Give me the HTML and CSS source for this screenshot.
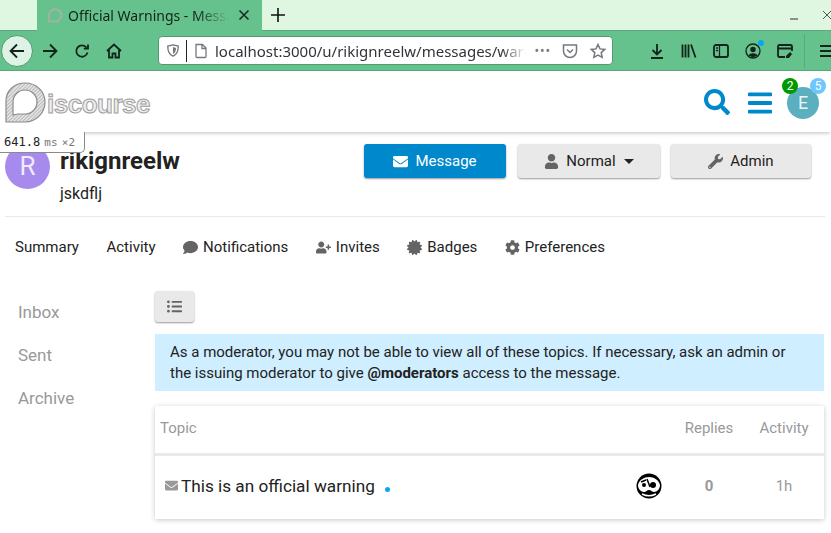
FILE: index.html
```html
<!DOCTYPE html>
<html>
<head>
	<title>Official Warnings - Messages</title>
	<meta charset="utf-8">
	<link rel="stylesheet" href="styles.css">
</head>
<body>
	<svg class="defs" width="0" height="0">
		<symbol id="i-search" viewBox="0 0 512 512"><path d="M505 442.7L405.3 343c-4.5-4.5-10.6-7-17-7H372c27.6-35.3 44-79.7 44-128C416 93.1 322.9 0 208 0S0 93.1 0 208s93.1 208 208 208c48.3 0 92.7-16.4 128-44v16.3c0 6.4 2.5 12.5 7 17l99.7 99.7c9.4 9.4 24.6 9.4 33.9 0l28.3-28.3c9.4-9.4 9.4-24.6.1-34zM208 336c-70.7 0-128-57.2-128-128 0-70.7 57.2-128 128-128 70.7 0 128 57.2 128 128 0 70.7-57.2 128-128 128z"/></symbol>
		<symbol id="i-bars" viewBox="0 0 448 512"><path d="M16 132h416c8.837 0 16-7.163 16-16V76c0-8.837-7.163-16-16-16H16C7.163 60 0 67.163 0 76v40c0 8.837 7.163 16 16 16zm0 160h416c8.837 0 16-7.163 16-16v-40c0-8.837-7.163-16-16-16H16c-8.837 0-16 7.163-16 16v40c0 8.837 7.163 16 16 16zm0 160h416c8.837 0 16-7.163 16-16v-40c0-8.837-7.163-16-16-16H16c-8.837 0-16 7.163-16 16v40c0 8.837 7.163 16 16 16z"/></symbol>
		<symbol id="i-envelope" viewBox="0 0 512 512"><path d="M502.3 190.8c3.9-3.1 9.7-.2 9.7 4.7V400c0 26.5-21.5 48-48 48H48c-26.5 0-48-21.5-48-48V195.6c0-5 5.7-7.8 9.7-4.7 22.4 17.4 52.1 39.5 154.1 113.6 21.1 15.4 56.7 47.8 92.2 47.6 35.7.3 72-32.8 92.3-47.6 102-74.1 131.6-96.3 154-113.7zM256 320c23.2.4 56.6-29.2 73.4-41.4 132.7-96.3 142.8-104.7 173.4-128.7 5.8-4.5 9.2-11.5 9.2-18.9v-19c0-26.5-21.5-48-48-48H48C21.5 64 0 85.5 0 112v19c0 7.4 3.4 14.3 9.2 18.9 30.6 23.9 40.7 32.4 173.4 128.7 16.8 12.2 50.2 41.8 73.4 41.4z"/></symbol>
		<symbol id="i-user" viewBox="0 0 448 512"><path d="M224 256c70.7 0 128-57.3 128-128S294.7 0 224 0 96 57.3 96 128s57.3 128 128 128zm89.6 32h-16.7c-22.2 10.2-46.9 16-72.9 16s-50.6-5.8-72.9-16h-16.7C60.2 288 0 348.2 0 422.4V464c0 26.5 21.5 48 48 48h352c26.5 0 48-21.5 48-48v-41.6c0-74.2-60.2-134.4-134.4-134.4z"/></symbol>
		<symbol id="i-wrench" viewBox="0 0 512 512"><path d="M507.73 109.1c-2.24-9.03-13.54-12.09-20.12-5.51l-74.36 74.36-67.88-11.31-11.31-67.88 74.36-74.36c6.62-6.62 3.43-17.9-5.66-20.16-47.38-11.74-99.55.91-136.58 37.93-39.64 39.64-50.55 97.1-34.05 147.2L18.74 402.76c-24.99 24.99-24.99 65.51 0 90.5 24.99 24.99 65.51 24.99 90.5 0l213.21-213.21c50.12 16.71 107.47 5.68 147.37-34.22 37.07-37.07 49.7-89.32 37.91-136.73zM64 472c-13.25 0-24-10.75-24-24 0-13.26 10.75-24 24-24s24 10.74 24 24c0 13.25-10.75 24-24 24z"/></symbol>
		<symbol id="i-comment" viewBox="0 0 512 512"><path d="M256 32C114.6 32 0 125.1 0 240c0 49.6 21.4 95 57 130.7C44.5 421.1 2.7 466 2.2 466.5c-2.2 2.3-2.8 5.7-1.5 8.7S4.8 480 8 480c66.3 0 116-31.8 140.6-51.4 32.7 12.3 69 19.4 107.4 19.4 141.4 0 256-93.1 256-208S397.4 32 256 32z"/></symbol>
		<symbol id="i-user-plus" viewBox="0 0 640 512"><path d="M624 208h-64v-64c0-8.8-7.2-16-16-16h-32c-8.8 0-16 7.2-16 16v64h-64c-8.8 0-16 7.2-16 16v32c0 8.8 7.2 16 16 16h64v64c0 8.8 7.2 16 16 16h32c8.8 0 16-7.2 16-16v-64h64c8.8 0 16-7.2 16-16v-32c0-8.8-7.2-16-16-16zm-400 48c70.7 0 128-57.3 128-128S294.7 0 224 0 96 57.3 96 128s57.3 128 128 128zm89.6 32h-16.7c-22.2 10.2-46.9 16-72.9 16s-50.6-5.8-72.9-16h-16.7C60.2 288 0 348.2 0 422.4V464c0 26.5 21.5 48 48 48h352c26.5 0 48-21.5 48-48v-41.6c0-74.2-60.2-134.4-134.4-134.4z"/></symbol>
		<symbol id="i-certificate" viewBox="0 0 512 512"><path d="M458.622 255.92l45.985-45.005c13.708-12.977 7.316-36.039-10.664-40.339l-62.65-15.99 17.661-62.015c4.991-17.838-11.829-34.663-29.661-29.671l-61.994 17.667-15.984-62.671C337.085.197 313.765-6.276 300.99 7.228L256 53.57 211.011 7.229c-12.63-13.351-36.047-7.234-40.325 10.668l-15.984 62.671-61.995-17.667C74.87 57.907 58.056 74.738 63.046 92.572l17.661 62.015-62.65 15.99C.069 174.878-6.31 197.944 7.392 210.915l45.985 45.005-45.985 45.004c-13.708 12.977-7.316 36.039 10.664 40.339l62.65 15.99-17.661 62.015c-4.991 17.838 11.829 34.663 29.661 29.671l61.994-17.667 15.984 62.671c4.439 18.575 27.696 24.018 40.325 10.668L256 458.61l44.989 46.001c12.5 13.488 35.987 7.486 40.325-10.668l15.984-62.671 61.994 17.667c17.836 4.994 34.651-11.837 29.661-29.671l-17.661-62.015 62.65-15.99c17.987-4.302 24.366-27.367 10.664-40.339l-45.984-45.004z"/></symbol>
		<symbol id="i-cog" viewBox="0 0 512 512"><path d="M487.4 315.7l-42.6-24.6c4.3-23.2 4.3-47 0-70.2l42.6-24.6c4.9-2.8 7.1-8.6 5.5-14-11.1-35.6-30-67.8-54.7-94.6-3.8-4.1-10-5.1-14.8-2.3L380.8 110c-17.9-15.4-38.5-27.3-60.8-35.1V25.8c0-5.6-3.9-10.5-9.4-11.7-36.7-8.2-74.3-7.8-109.2 0-5.5 1.2-9.4 6.1-9.4 11.7V75c-22.2 7.9-42.8 19.8-60.8 35.1L88.7 85.5c-4.9-2.8-11-1.9-14.8 2.3-24.7 26.7-43.6 58.9-54.7 94.6-1.7 5.4.6 11.2 5.5 14L67.3 221c-4.3 23.2-4.3 47 0 70.2l-42.6 24.6c-4.9 2.8-7.1 8.6-5.5 14 11.1 35.6 30 67.8 54.7 94.6 3.8 4.1 10 5.1 14.8 2.3l42.6-24.6c17.9 15.4 38.5 27.3 60.8 35.1v49.2c0 5.6 3.9 10.5 9.4 11.7 36.7 8.2 74.3 7.8 109.2 0 5.5-1.2 9.4-6.1 9.4-11.7v-49.2c22.2-7.9 42.8-19.8 60.8-35.1l42.6 24.6c4.9 2.8 11 1.9 14.8-2.3 24.7-26.7 43.6-58.9 54.7-94.6 1.5-5.5-.7-11.3-5.6-14.1zM256 336c-44.1 0-80-35.9-80-80s35.9-80 80-80 80 35.9 80 80-35.9 80-80 80z"/></symbol>
		<symbol id="i-list" viewBox="0 0 512 512"><path d="M48 48a48 48 0 1 0 48 48 48 48 0 0 0-48-48zm0 160a48 48 0 1 0 48 48 48 48 0 0 0-48-48zm0 160a48 48 0 1 0 48 48 48 48 0 0 0-48-48zm448 16H176a16 16 0 0 0-16 16v32a16 16 0 0 0 16 16h320a16 16 0 0 0 16-16v-32a16 16 0 0 0-16-16zm0-320H176a16 16 0 0 0-16 16v32a16 16 0 0 0 16 16h320a16 16 0 0 0 16-16V80a16 16 0 0 0-16-16zm0 160H176a16 16 0 0 0-16 16v32a16 16 0 0 0 16 16h320a16 16 0 0 0 16-16v-32a16 16 0 0 0-16-16z"/></symbol>
		<pattern id="hatch" width="2.5" height="2.5" patternUnits="userSpaceOnUse" patternTransform="rotate(-45)">
			<rect width="2.5" height="2.5" fill="#e2e2e2"/>
			<rect width="2.5" height=".8" fill="#b4b4b4"/>
		</pattern>
	</svg>

	<div class="tabbar">
		<div class="tab">
			<svg class="tab-icon" viewBox="0 0 16 16"><path d="M2 14.500V8a6.200 6.200 0 1 1 6 6.500z" fill="none" stroke="#9cb3a6" stroke-width="2.200"/></svg>
			<span class="tab-title">Official Warnings - Messages</span>
			<svg class="tab-close" viewBox="0 0 12 12"><path d="M1.500 1.500l9 9m0-9l-9 9" stroke="#1c2b23" stroke-width="1.600"/></svg>
		</div>
		<svg class="tab-new" viewBox="0 0 14 14"><path d="M7 0v14M0 7h14" stroke="#111" stroke-width="1.600"/></svg>
		<div class="window-btns">
			<svg class="win-min" viewBox="0 0 10 10"><path d="M1 9h8" stroke="#333" stroke-width="1"/></svg>
			<svg class="win-close" viewBox="0 0 10 10"><path d="M1 1l8 8m0-8l-8 8" stroke="#555" stroke-width="1"/></svg>
		</div>
	</div>

	<div class="toolbar">
		<div class="back-btn">
			<svg class="tb-icon" viewBox="0 0 16 16"><path d="M15 8H1.500M8 1.500L1.500 8 8 14.500" class="tb-line"/></svg>
		</div>
		<div class="tb-btn tb-forward"><svg class="tb-icon" viewBox="0 0 16 16"><path d="M1 8h13.500M8 1.500L14.500 8 8 14.500" class="tb-line"/></svg></div>
		<div class="tb-btn"><svg class="tb-icon" viewBox="0 0 16 16"><path d="M13.500 9.500A5.700 5.700 0 1 1 12.500 4.500M14 1.500v4.200H9.800" class="tb-line"/></svg></div>
		<div class="tb-btn"><svg class="tb-icon" viewBox="0 0 16 16"><path d="M1 8l7-6.500 7 6.500M3 7v7.500h3.500v-4h3v4H13V7" class="tb-line"/></svg></div>

		<div class="urlbar">
			<svg class="url-shield" viewBox="0 0 16 16"><path d="M8 1.500l6 1.500c0 6-1.500 9.500-6 11.500C3.500 12.500 2 9 2 3z" fill="none" stroke="#77777f" stroke-width="1.500"/><path d="M8 4l3.500 1C11.300 8.500 10.500 10.500 8 12z" fill="#77777f"/></svg>
			<span class="url-sep"></span>
			<svg class="url-page" viewBox="0 0 16 16"><path d="M3 1.500h6.500l3.500 3.500v8.500a1 1 0 0 1-1 1H4a1 1 0 0 1-1-1zM9 1.500V5.500h4" fill="none" stroke="#77777f" stroke-width="1.300"/></svg>
			<span class="url-text">localhost:3000/u/rikignreelw/messages/warnings</span>
			<span class="url-dots">&bull;&bull;&bull;</span>
			<svg class="url-icon" viewBox="0 0 16 16"><path d="M1.500 2h13v6a6.500 6.500 0 0 1-13 0zM5 6.500l3 3 3-3" fill="none" stroke="#77777f" stroke-width="1.500"/></svg>
			<svg class="url-icon url-star" viewBox="0 0 16 16"><path d="M8 1.500l2 4.400 4.700.5-3.500 3.200 1 4.700L8 12l-4.200 2.300 1-4.700L1.300 6.400 6 5.900z" fill="none" stroke="#77777f" stroke-width="1.500"/></svg>
		</div>

		<div class="tb-right">
			<div class="tb-btn"><svg class="tb-icon" viewBox="0 0 16 16"><path d="M8 1v10M3.500 7L8 11.500 12.500 7M2 15h12" class="tb-line"/></svg></div>
			<div class="tb-btn"><svg class="tb-icon" viewBox="0 0 16 16"><path d="M1.500 1.500v13M4.500 1.500v13M7.500 1.500v13M10 1.500l4.500 13" class="tb-line"/></svg></div>
			<div class="tb-btn"><svg class="tb-icon" viewBox="0 0 16 16"><rect x="1" y="2" width="14" height="12" rx="2" class="tb-line"/><path d="M6.500 2v12M3 5h2M3 7.500h2" class="tb-line tb-thin"/></svg></div>
			<div class="tb-btn tb-account"><svg class="tb-icon" viewBox="0 0 16 16"><circle cx="8" cy="8" r="7" class="tb-line tb-thin"/><circle cx="8" cy="6.500" r="2.700" fill="#14231b"/><path d="M3.500 12.500c1-3 8-3 9 0L8 14.500z" fill="#14231b"/></svg><span class="account-dot"></span></div>
			<div class="tb-btn"><svg class="tb-icon" viewBox="0 0 16 16"><path d="M8 14H2.500a1.500 1.500 0 0 1-1.500-1.500v-9A1.500 1.500 0 0 1 2.500 2h11A1.500 1.500 0 0 1 15 3.500V8M1 5.500h14" class="tb-line"/><path d="M9 13l4-4 2 2-3 4H9z" fill="#14231b"/></svg></div>
			<span class="tb-sep"></span>
			<div class="tb-btn tb-menu"><svg class="tb-icon" viewBox="0 0 16 16"><path d="M1 3h14M1 8h14M1 13h14" class="tb-line"/></svg></div>
		</div>
	</div>

	<header class="site-header">
		<a class="logo">
			<svg class="logo-mark" viewBox="0 0 41 41"><path d="M1 40V19C1 9 9 1 20 1c11 0 20 8 20 19s-9 20-20 20z" fill="url(#hatch)" stroke="#8b8b8b" stroke-width="1.200"/><path d="M8 33V20a12 12 0 1 1 12 12H13z" fill="#fff" stroke="#8b8b8b" stroke-width="1.200"/></svg>
			<span class="logo-text">iscourse</span>
		</a>
		<div class="header-icons">
			<svg class="hd-icon hd-search"><use href="#i-search"/></svg>
			<svg class="hd-icon hd-bars"><use href="#i-bars"/></svg>
			<div class="current-user">
				E
				<span class="badge badge-green">2</span>
				<span class="badge badge-blue">5</span>
			</div>
		</div>
	</header>

	<div class="perf-badge">641.8 <small>ms</small> <small class="perf-x">&times;2</small></div>

	<section class="user-head">
		<div class="user-avatar">R</div>
		<div class="user-names">
			<h1>rikignreelw</h1>
			<p>jskdflj</p>
		</div>
		<div class="user-btns">
			<button class="btn btn-primary"><svg class="ico"><use href="#i-envelope"/></svg>Message</button>
			<button class="btn btn-normal"><svg class="ico"><use href="#i-user"/></svg>Normal<span class="caret"></span></button>
			<button class="btn btn-admin"><svg class="ico"><use href="#i-wrench"/></svg>Admin</button>
		</div>
	</section>

	<nav class="user-nav">
		<a>Summary</a>
		<a>Activity</a>
		<a><svg class="ico"><use href="#i-comment"/></svg>Notifications</a>
		<a><svg class="ico"><use href="#i-user-plus"/></svg>Invites</a>
		<a><svg class="ico"><use href="#i-certificate"/></svg>Badges</a>
		<a><svg class="ico"><use href="#i-cog"/></svg>Preferences</a>
	</nav>

	<div class="messages">
		<ul class="side-nav">
			<li>Inbox</li>
			<li>Sent</li>
			<li>Archive</li>
		</ul>
		<main class="messages-main">
			<button class="btn btn-list"><svg class="ico"><use href="#i-list"/></svg></button>
			<div class="notice">As a moderator, you may not be able to view all of these topics. If necessary, ask an admin or the issuing moderator to give <b>@moderators</b> access to the message.</div>
			<table class="topics">
				<thead>
					<tr>
						<th class="col-topic">Topic</th>
						<th class="col-poster"></th>
						<th class="col-replies">Replies</th>
						<th class="col-activity">Activity</th>
					</tr>
				</thead>
				<tbody>
					<tr>
						<td class="topic-title"><svg class="ico-mail"><use href="#i-envelope"/></svg>This is an official warning<span class="unread-dot"></span></td>
						<td class="topic-poster">
							<svg class="poster" viewBox="0 0 26 26"><circle cx="13" cy="13" r="12.500" fill="#000"/><path d="M2 12c1-5 6-8 11-8s10 3 11 8c0 4-3 7-6 7-2 0-3-2-5-2s-3 2-5 2c-3 0-6-3-6-7z" fill="#fff"/><circle cx="8" cy="12" r="2" fill="#000"/><circle cx="17" cy="12" r="3" fill="#000"/><path d="M11 6l3 8M5 9l5-2" stroke="#000" stroke-width="1.500"/><path d="M6 21c5 2.500 9 2.500 14 0" stroke="#fff" stroke-width="1.500" fill="none"/></svg>
						</td>
						<td class="topic-replies">0</td>
						<td class="topic-activity">1h</td>
					</tr>
				</tbody>
			</table>
		</main>
	</div>
</body>
</html>
```

FILE: styles.css
```css
* {
	box-sizing: border-box;
}

html, body {
	height: 533px;
	overflow: hidden;
}

body {
	margin: 0;
	background: #fff;
	color: #222;
	font-family: Roboto, sans-serif;
	font-size: 15px;
}

.defs {
	position: absolute;
}

/* browser chrome */
.tabbar {
	display: flex;
	align-items: center;
	height: 31px;
	padding-left: 37px;
	background: #dff7e0;
	border-bottom: 1px solid #5aa87c;
}

.tab {
	display: flex;
	align-items: center;
	width: 225px;
	height: 31px;
	padding: 0 12px 0 10px;
	background: #66c28c;
	font-family: "Noto Sans", sans-serif;
	font-size: 14px;
	color: #14231b;
}

.tab-icon {
	width: 16px;
	height: 16px;
	margin-right: 5px;
	flex: none;
}

.tab-title {
	flex: 1;
	overflow: hidden;
	white-space: nowrap;
	-webkit-mask-image: linear-gradient(to right, #000 78%, transparent 98%);
	mask-image: linear-gradient(to right, #000 78%, transparent 98%);
}

.tab-close {
	width: 12px;
	height: 12px;
	margin-left: 6px;
	flex: none;
}

.tab-new {
	width: 14px;
	height: 14px;
	margin-left: 9px;
}

.window-btns {
	display: flex;
	align-items: center;
	gap: 23px;
	margin-left: auto;
	margin-right: -1px;
}

.win-min, .win-close {
	width: 10px;
	height: 10px;
}

.toolbar {
	display: flex;
	align-items: center;
	height: 40px;
	padding-left: 1px;
	background: #66c28c;
	border-bottom: 1px solid #5aa87c;
	overflow: hidden;
}

.tb-icon {
	width: 16px;
	height: 16px;
}

.tb-line {
	fill: none;
	stroke: #14231b;
	stroke-width: 1.800;
}

.tb-thin {
	stroke-width: 1.300;
}

.back-btn {
	display: flex;
	align-items: center;
	justify-content: center;
	flex: none;
	width: 32px;
	height: 32px;
	border-radius: 50%;
	background: #dff2e6;
	border: 1px solid #4f9c72;
}

.tb-btn {
	position: relative;
	display: flex;
	align-items: center;
	justify-content: center;
	flex: none;
	width: 32px;
	height: 32px;
}

.tb-forward {
	margin-left: 1px;
}

.urlbar {
	display: flex;
	align-items: center;
	flex: none;
	width: 455px;
	height: 29px;
	margin-left: 28px;
	padding: 0 6px 0 7px;
	background: #fff;
	border: 1px solid #4f9c72;
	border-radius: 4px;
	font-family: "Noto Sans", sans-serif;
	font-size: 15px;
	color: #33333a;
}

.url-shield {
	width: 14px;
	height: 15px;
	flex: none;
}

.url-sep {
	width: 1px;
	height: 22px;
	margin: 0 6px 0 6px;
	background: #222;
	flex: none;
}

.url-page {
	width: 16px;
	height: 16px;
	margin-right: 6px;
	flex: none;
}

.url-text {
	flex: 1;
	overflow: hidden;
	white-space: nowrap;
	-webkit-mask-image: linear-gradient(to right, #000 92%, transparent);
	mask-image: linear-gradient(to right, #000 92%, transparent);
}

.url-dots {
	margin: 0 11px 0 8px;
	color: #77777f;
	font-size: 12px;
	letter-spacing: 1px;
}

.url-icon {
	width: 16px;
	height: 16px;
	flex: none;
}

.url-star {
	margin-left: 12px;
}

.tb-right {
	display: flex;
	align-items: center;
	flex: none;
	margin-left: 28px;
}

.account-dot {
	position: absolute;
	top: 5px;
	right: 5px;
	width: 6px;
	height: 6px;
	border-radius: 50%;
	background: #0aa5f5;
}

.tb-sep {
	width: 1px;
	height: 34px;
	margin-left: 3px;
	background: #5aa87c;
}

.tb-menu {
	margin-left: 6px;
}

/* discourse header */
.site-header {
	display: flex;
	align-items: center;
	justify-content: space-between;
	height: 61px;
	padding: 0 12px 0 5px;
	background: #fff;
	box-shadow: 0 2px 4px -1px rgba(0, 0, 0, .25);
}

.logo {
	display: flex;
	align-items: flex-end;
	height: 41px;
	margin-top: 1px;
}

.logo-mark {
	width: 41px;
	height: 41px;
	flex: none;
}

.logo-text {
	margin-left: 1px;
	padding-bottom: 1px;
	font-family: "Liberation Sans", sans-serif;
	font-weight: bold;
	font-size: 26px;
	line-height: 36px;
	letter-spacing: -.5px;
	color: #ededed;
	-webkit-text-stroke: 1px #a0a0a0;
}

.header-icons {
	display: flex;
	align-items: center;
}

.hd-icon {
	fill: #0088cc;
}

.hd-search {
	width: 26px;
	height: 26px;
	margin-top: 1px;
}

.hd-bars {
	width: 24px;
	height: 28px;
	margin-top: 2px;
	margin-left: 18px;
}

.current-user {
	position: relative;
	width: 32px;
	height: 32px;
	margin-left: 15px;
	margin-top: 2px;
	border-radius: 50%;
	background: #5cafbf;
	color: #e8f6f8;
	font-size: 18px;
	line-height: 32px;
	text-align: center;
}

.badge {
	position: absolute;
	top: -9px;
	width: 16px;
	height: 16px;
	border-radius: 50%;
	color: #fff;
	font-size: 12px;
	line-height: 16px;
	text-align: center;
}

.badge-green {
	left: -5px;
	background: #009900;
}

.badge-blue {
	right: -7px;
	background: #6cc7ff;
}

.perf-badge {
	position: absolute;
	top: 132px;
	left: 0;
	z-index: 2;
	width: 85px;
	height: 21px;
	padding: 0 0 0 4px;
	background: #fff;
	border: solid #8a8a8a;
	border-width: 0 1px 1px 0;
	border-bottom-right-radius: 5px;
	font-family: "DejaVu Sans Mono", monospace;
	font-size: 12px;
	line-height: 20px;
	word-spacing: -3px;
	color: #222;
	white-space: nowrap;
}

.perf-badge small {
	font-size: 11px;
	color: #777;
}

/* user header */
.user-head {
	display: flex;
	height: 85px;
	margin: 0 6px 0 5px;
	padding-top: 12px;
	border-bottom: 1px solid #e9e9e9;
}

.user-avatar {
	width: 45px;
	height: 45px;
	flex: none;
	border-radius: 50%;
	background: #a68bed;
	color: #efeaff;
	font-size: 26px;
	line-height: 45px;
	text-align: center;
}

.user-names {
	margin-left: 10px;
}

.user-names h1 {
	margin: 0;
	font-size: 24px;
	font-weight: 700;
	line-height: 34px;
	color: #222;
}

.user-names p {
	margin: 2px 0 0;
	font-size: 16px;
	line-height: 28px;
}

.user-btns {
	display: flex;
	gap: 11px;
	margin-left: auto;
	margin-right: 14px;
}

.btn {
	display: flex;
	align-items: center;
	justify-content: center;
	width: 142px;
	height: 34px;
	padding: 0;
	border: 0;
	border-radius: 3px;
	background: #e9e9e9;
	box-shadow: 0 1px 2px rgba(0, 0, 0, .4);
	color: #222;
	font-family: Roboto, sans-serif;
	font-size: 15px;
}

.btn-primary {
	background: #0088cc;
	color: #fff;
}

.btn-normal {
	margin-left: 1px;
}

.btn-admin {
	width: 140px;
}

.ico {
	width: 15px;
	height: 15px;
	margin-right: 5px;
	fill: #646464;
	flex: none;
}

.btn .ico {
	margin-right: 7px;
}

.btn-primary .ico {
	fill: #fff;
}

.caret {
	width: 0;
	height: 0;
	margin-left: 8px;
	border: solid transparent;
	border-width: 5px 5px 0;
	border-top-color: #222;
}

/* tabs */
.user-nav {
	display: flex;
	gap: 27.500px;
	height: 74px;
	padding: 20px 0 0 15px;
	line-height: 20px;
	color: #222;
}

.user-nav a {
	display: flex;
	align-items: center;
	height: 20px;
}

.messages {
	display: grid;
	grid-template-columns: 155px 1fr;
}

.side-nav {
	margin: 0;
	padding: 0 0 0 18px;
	list-style: none;
	font-size: 17px;
	color: #999;
}

.side-nav li {
	height: 43px;
	line-height: 43px;
}

.messages-main {
	padding-right: 7px;
}

.btn-list {
	width: 39px;
	height: 31px;
}

.btn-list .ico {
	margin: 0;
}

.notice {
	height: 57px;
	margin-top: 12px;
	padding: 8px 15px 0;
	background: #cfeeff;
	line-height: 21px;
}

.topics {
	width: 100%;
	margin-top: 15px;
	border-collapse: collapse;
	table-layout: fixed;
	box-shadow: 0 1px 5px rgba(0, 0, 0, .22);
}

.topics th {
	height: 48px;
	padding: 0 0 2px;
	border-bottom: 3px solid #e9e9e9;
	color: #999;
	font-weight: 400;
	font-size: 15px;
	text-align: center;
}

.topics th.col-topic {
	padding-left: 5px;
	text-align: left;
}

.col-poster {
	width: 50px;
}

.col-replies {
	width: 70px;
}

.col-activity {
	width: 80px;
}

.topics td {
	height: 65px;
	padding: 0 0 2px;
	text-align: center;
	color: #999;
}

.topics td.topic-title {
	padding-left: 10px;
	text-align: left;
	color: #222;
	font-size: 17.200px;
}

.ico-mail {
	width: 13px;
	height: 13px;
	margin-right: 3px;
	fill: #999;
}

.unread-dot {
	display: inline-block;
	width: 5px;
	height: 5px;
	margin-left: 10px;
	border-radius: 50%;
	background: #0aa5f5;
	vertical-align: 0;
}

.poster {
	display: block;
	width: 26px;
	height: 26px;
	margin: 0 auto;
}

.topics td.topic-replies {
	font-weight: 700;
}
```
